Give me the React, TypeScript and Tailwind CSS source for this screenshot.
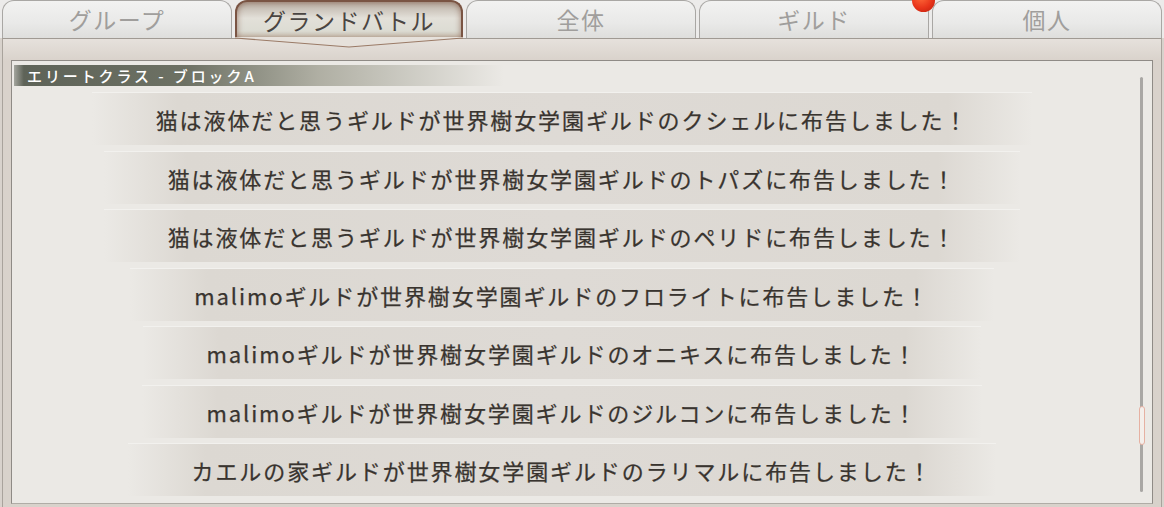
import React from 'react';

const TABS = ['グループ', 'グランドバトル', '全体', 'ギルド', '個人'];
const ACTIVE = 1;

const ROWS = [
  '猫は液体だと思うギルドが世界樹女学園ギルドのクシェルに布告しました！',
  '猫は液体だと思うギルドが世界樹女学園ギルドのトパズに布告しました！',
  '猫は液体だと思うギルドが世界樹女学園ギルドのペリドに布告しました！',
  'malimoギルドが世界樹女学園ギルドのフロライトに布告しました！',
  'malimoギルドが世界樹女学園ギルドのオニキスに布告しました！',
  'malimoギルドが世界樹女学園ギルドのジルコンに布告しました！',
  'カエルの家ギルドが世界樹女学園ギルドのラリマルに布告しました！',
];

const FONT = '"Noto Sans CJK JP", "Noto Sans", sans-serif';

function Tab({ label, active }: { label: string; active: boolean }) {
  if (active) {
    return (
      <div className="relative flex-1 h-[38px]">
        <div className="h-full rounded-t-[12px] border-2 border-b-0 border-[#7a5443] bg-[linear-gradient(180deg,#b9aea3_0%,#e3e0d9_45%,#dcdcd3_80%,#cfc6b8_100%)] shadow-[inset_0_0_6px_rgba(110,60,40,0.6)] flex items-center justify-center">
          <span className="text-[23px] tracking-[1.5px] text-[#4a4542] leading-none">{label}</span>
        </div>
        {/* shallow notch hanging below the active tab */}
        <svg className="absolute left-0 top-[37px] w-full h-[12px]" viewBox="0 0 232 12" preserveAspectRatio="none">
          <path d="M0 0 L232 0 L232 1 L116 10 L0 1 Z" fill="#e6e1db" />
          <path d="M0 1 L116 10 L232 1" fill="none" stroke="#9a7a66" strokeWidth="1.2" />
        </svg>
      </div>
    );
  }
  return (
    <div className="flex-1 h-[38px] rounded-t-[12px] border border-b-0 border-[#a9a7a4] bg-[linear-gradient(180deg,#f2f2f1_0%,#e9e9e8_60%,#dededc_100%)] flex items-center justify-center">
      <span className="text-[23px] tracking-[1.5px] text-[#a09e9c] leading-none">{label}</span>
    </div>
  );
}

export default function App() {
  return (
    <div className="relative w-[1164px] h-[507px] overflow-hidden bg-[#d8d2cc]" style={{ fontFamily: FONT }}>
      {/* Tabs */}
      <div className="flex gap-[3px] px-[2px] bg-[#ecebea]">
        {TABS.map((t, i) => (
          <Tab key={t} label={t} active={i === ACTIVE} />
        ))}
      </div>

      {/* Frame */}
      <div className="mx-[2px] h-[469px] border border-t-[#a09a93] border-x-[#a9a39c] border-b-0 bg-[linear-gradient(180deg,#e6e1dc_0%,#d9d2cb_22px,#d8d2cb_100%)] pt-[21px] px-[8px] pb-[3px]">
        <div className="relative h-full border border-[#8f8b86] border-b-[#b0aca6] bg-[#ebe9e5] pt-[4px]">
          {/* section header */}
          <div className="ml-[2px] w-[490px] h-[21px] flex items-center pl-[13px] bg-[linear-gradient(90deg,rgba(93,98,87,0.5)_0%,#5e6358_2%,#6d7164_35%,rgba(150,150,135,0.7)_62%,rgba(235,233,229,0)_100%)]">
            <span className="text-[15px] font-medium tracking-[2.9px] text-white leading-none">エリートクラス - ブロックA</span>
          </div>

          {/* list */}
          <div className="flex flex-col gap-[5.5px] pt-[6px] pr-[40px]">
            {ROWS.map((r, i) => (
              <div key={i} className="h-[53px] flex items-center justify-center">
                <div className="h-full flex items-center px-[64px] bg-[linear-gradient(90deg,rgba(220,216,210,0)_0%,#dcd8d2_9%,#dedad5_50%,#dcd8d2_91%,rgba(220,216,210,0)_100%)] border-t border-[#f2f1ee]">
                  <span className="text-[22px] font-normal tracking-[1.9px] text-[#39342f] leading-none whitespace-nowrap [-webkit-text-stroke:0.25px_#39342f]">{r}</span>
                </div>
              </div>
            ))}
          </div>

          {/* scrollbar */}
          <div className="absolute right-[9px] top-[16px] w-[3px] h-[415px] rounded-full bg-[#a9a7a4]" />
          <div className="absolute right-[7px] top-[345px] w-[6px] h-[39px] rounded-[3px] border border-[#e6b1a2] bg-[#f4efeb]" />
        </div>
      </div>

      {/* notification dot */}
      <div className="absolute left-[912px] top-[-11px] w-[23px] h-[23px] rounded-full bg-[radial-gradient(circle_at_40%_35%,#ff6a3a_0%,#e8341a_55%,#b81e0c_100%)]" />
    </div>
  );
}
